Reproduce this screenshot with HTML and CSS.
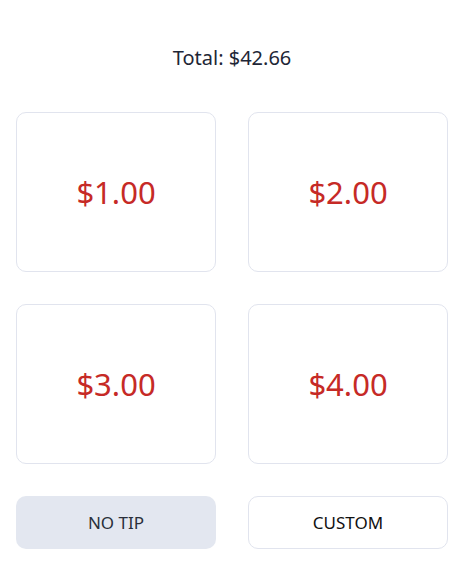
FILE: index.html
```html
<!DOCTYPE html>
<html lang="en">
<head>
    <meta charset="UTF-8">
    <meta name="viewport" content="width=device-width, initial-scale=1.0">
    <title>Tip</title>
    <link rel="stylesheet" href="styles.css">
</head>
<body>

    <main class="tip">
        <div class="tip-total">Total: $42.66</div>

        <div class="tip-grid">
            <button class="tip-card">$1.00</button>
            <button class="tip-card">$2.00</button>
            <button class="tip-card">$3.00</button>
            <button class="tip-card">$4.00</button>
        </div>

        <div class="tip-actions">
            <button class="tip-btn tip-btn-none">NO TIP</button>
            <button class="tip-btn tip-btn-custom">CUSTOM</button>
        </div>
    </main>

</body>
</html>
```

FILE: styles.css
```css
:root
{
    --text-color: #1e2636;
    --amount-color: #c62a26;
    --line-color: #e1e4ee;
    --muted-bg: #e3e7f0;
}

*
{
    padding: 0px;
    margin: 0px;
    box-sizing: border-box;
    font-family: "Noto Sans", sans-serif;
}

body
{
    background-color: #ffffff;
}

.tip
{
    display: flex;
    flex-flow: column nowrap;
    padding: 46px 16px 16px 16px;
}

.tip-total
{
    text-align: center;
    font-size: 20px;
    line-height: 24px;
    color: var(--text-color);
    margin-bottom: 42px;
}

.tip-grid
{
    display: grid;
    grid-template-columns: 1fr 1fr;
    grid-auto-rows: 160px;
    gap: 32px;
}

.tip-card
{
    display: flex;
    justify-content: center;
    align-items: center;
    background-color: #ffffff;
    border: solid 1px var(--line-color);
    border-radius: 10px;
    font-size: 31px;
    color: var(--amount-color);
    cursor: pointer;
}

.tip-actions
{
    display: grid;
    grid-template-columns: 1fr 1fr;
    gap: 32px;
    margin-top: 32px;
}

.tip-btn
{
    height: 53px;
    border-radius: 10px;
    font-size: 17px;
    color: #111111;
    cursor: pointer;
}

.tip-btn-none
{
    background-color: var(--muted-bg);
    border: none;
    color: #2a2f3a;
}

.tip-btn-custom
{
    background-color: #ffffff;
    border: solid 1px var(--line-color);
}
```
